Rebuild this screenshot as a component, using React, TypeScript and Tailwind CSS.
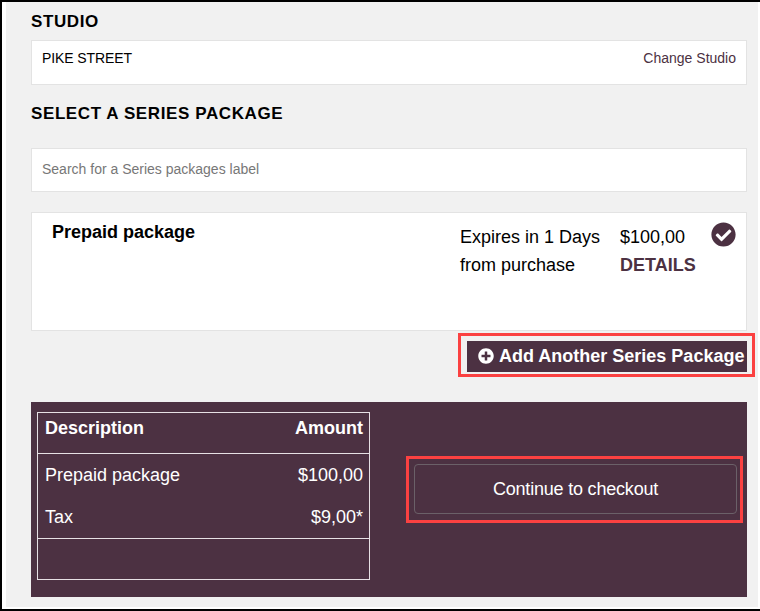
import { FaCheckCircle, FaPlusCircle } from "react-icons/fa"

export default function App() {
  return (
    <div className="h-[611px] w-[760px] overflow-hidden border-t-2 border-b-2 border-l-2 border-black bg-white font-['Liberation_Sans',Arial,sans-serif] text-black">
      <div className="ml-1 mr-[2px] h-[605px] bg-[#f1f1f1] pl-[25px] pr-[11px]">
        <h2 className="pt-[11px] text-[17px] leading-[18px] font-bold tracking-[0.6px]">STUDIO</h2>

        <div className="mt-[9px] flex h-[45px] items-start justify-between border border-[#e3e3e3] bg-white px-[10px] pt-[9px] text-sm leading-4">
          <span className="tracking-[-0.1px]">PIKE STREET</span>
          <a className="text-[#4c3142]">Change Studio</a>
        </div>

        <h2 className="mt-[20px] text-[17px] leading-[18px] font-bold tracking-[0.6px]">SELECT A SERIES PACKAGE</h2>

        <div className="mt-[25px] flex h-[44px] items-center border border-[#e3e3e3] bg-white px-[10px] pb-[2px] text-sm text-[#777777]">
          Search for a Series packages label
        </div>

        <div className="mt-[20px] flex h-[119px] border border-[#e3e3e3] bg-white">
          <div className="flex-1 pt-[8px] pl-[20px] text-lg leading-[22px] font-bold">Prepaid package</div>
          <div className="w-[160px] pt-[10px] text-lg leading-[28px]">
            Expires in 1 Days
            <br />
            from purchase
          </div>
          <div className="w-[91px] pt-[10px] text-lg leading-[28px]">
            $100,00
            <div className="font-bold text-[#4c3142]">DETAILS</div>
          </div>
          <div className="pt-[9px] pr-[10px]">
            <FaCheckCircle size={25} className="text-[#4c3142]" />
          </div>
        </div>

        <div className="mt-[2px] flex justify-end">
          <div className="-mr-[8px] h-[44px] w-[297px] border-[3px] border-[#fb4141] pt-[5px] pr-[5px] pl-[6px]">
            <button className="flex h-[31px] w-full items-center gap-[5px] bg-[#4c3142] pb-[2px] pl-[11px] text-lg font-bold whitespace-nowrap text-white">
              <FaPlusCircle size={16} />
              Add Another Series Package
            </button>
          </div>
        </div>

        <div className="mt-[25px] flex h-[195px] bg-[#4c3142] pt-[10px] pl-[6px] text-white">
          <div className="h-[168px] w-[333px] border border-[#e6e0e4] text-lg">
            <div className="flex h-[41px] items-start justify-between border-b border-[#e6e0e4] pt-[3px] pr-[6px] pl-[7px] leading-[24px] font-bold">
              <span>Description</span>
              <span>Amount</span>
            </div>
            <div className="flex h-[43px] items-center justify-between pr-[6px] pb-[2px] pl-[7px]">
              <span>Prepaid package</span>
              <span>$100,00</span>
            </div>
            <div className="flex h-[42px] items-center justify-between border-b border-[#e6e0e4] pr-[6px] pb-[2px] pl-[7px]">
              <span>Tax</span>
              <span>$9,00*</span>
            </div>
          </div>
          <div className="mt-[44px] ml-[36px] h-[67px] w-[337px] border-[3px] border-[#fb4141] pt-[5px] pr-[3px] pl-[5px]">
            <button className="h-[50px] w-full rounded-[4px] border border-[#6b6068] text-lg tracking-[-0.2px] text-white">Continue to checkout</button>
          </div>
        </div>
      </div>
    </div>
  )
}
